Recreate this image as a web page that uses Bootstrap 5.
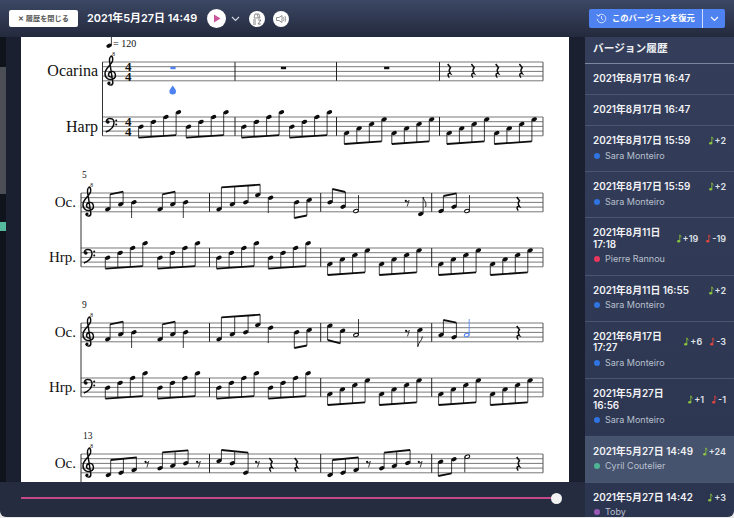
<!DOCTYPE html>
<html lang="ja">
<head>
<meta charset="utf-8">
<title>履歴</title>
<link href="https://cdn.jsdelivr.net/npm/bootstrap@5.3.0/dist/css/bootstrap.min.css" rel="stylesheet">
<style>
html,body{height:100%;margin:0;overflow:hidden;background:#e9e9e9;font-family:Inter,"Noto Sans CJK JP",sans-serif}
.app-frame{width:734px;height:517px;border-radius:0 0 6px 6px;overflow:hidden;color:#fff}
.top-bar{height:37px;flex:none;background:linear-gradient(#3b4764,#242a3d);padding:0 9px}
.close-btn{width:69px;height:17px;padding:0;border:0;border-radius:2px;background:#fff;color:#555;font-size:7.2px;font-weight:700;line-height:17px;white-space:nowrap}
.close-btn:hover{background:#fff;color:#555}
.now-date{font-size:10.9px;font-weight:600;margin-left:9px;width:110px;white-space:nowrap}
.round-ico{border-radius:50%;background:#fff;flex:none}
.play-ico{width:19px;height:19px;margin-left:10px}
.tool-ico{width:16px;height:16px}
.ico-a{margin-left:9px}.ico-b{margin-left:8px}
.chev-ico{margin-left:5px}
.restore-grp{width:136px;height:19px;border-radius:2px;background:#4d82f0;font-size:8.3px;font-weight:700}
.restore-main{padding:0 0 0 7px;width:114px;border-right:1px solid #cfdcfb;height:100%;white-space:nowrap;gap:5px}
.restore-side{flex:1;height:100%}
.work-col{width:585px}
.score-row{height:445px}
.rail{width:21px;background:#1a2030}
.rail-strip{width:5.5px;background:#0f131b}
.rs-a{height:30px}.rs-b{height:127px;background:#4b4e55}.rs-c{height:28px}.rs-d{height:9px;background:#56b89c}
.sheet{width:548px;height:445px;background:#fff;display:block;flex:none}
.gutter{width:16px;background:#1a2030}
.seek-bar{height:35px;background:#252c40;padding:0 23px 3px 21px}
.seek-track{height:2px;background:#c4488a}
.seek-thumb{width:11px;height:11px;margin-left:-5px;background:#f2f2f2;border-radius:50%;flex:none}
.side-col{width:149px;background:linear-gradient(#343e5a,#2c3550);overflow:hidden}
.side-head{height:27px;flex:none;font-size:10.7px;font-weight:700;padding:0 8px 2px;border-bottom:1px solid #7c869c;color:#eef0f4}
.ver-item{background:transparent;color:#fff;border-color:#4a5570;padding:9px 8px 9.5px;flex:none}
.ver-item.picked{background:#46536e;color:#fff}
.ver-date{font-size:9.9px;font-weight:600;line-height:11.5px;color:#f1f2f5;min-width:0}
.ver-stat{font-size:9px;line-height:11.5px;font-weight:600;color:#dfe2e8;white-space:nowrap;flex:none;margin-left:3px}
.ver-who{font-size:9px;line-height:12px;margin-top:3px;color:#b9c0ce;gap:5px}
.who-dot{width:6px;height:6px;border-radius:50%;margin-left:1px}
.note-ico{vertical-align:-1px;margin-right:1px}
.sheet text{font-family:"Liberation Serif",serif;fill:#111}
</style>
</head>
<body>
<div class="app-frame d-flex flex-column">
  <header class="top-bar d-flex align-items-center">
    <button type="button" class="btn close-btn">✕ 履歴を閉じる</button>
    <span class="now-date">2021年5月27日 14:49</span>
    <svg class="round-ico play-ico" viewBox="0 0 19 19"><path d="M7 5.5 L13.5 9.5 L7 13.5Z" fill="#c9559b"/></svg>
    <svg class="chev-ico" width="9" height="6" viewBox="0 0 9 6"><path d="M1 1 L4.5 4.5 L8 1" fill="none" stroke="#d5d9e2" stroke-width="1.1"/></svg>
    <svg class="round-ico tool-ico ico-a" viewBox="0 0 16 16"><path d="M6 3 H10 L11 7 H5Z M8 3 L9.5 7" fill="none" stroke="#777" stroke-width=".8"/><path d="M4 9 H7 M4 11 H7 M4 13 H7 M9 9 H12 L9 13 H12" fill="none" stroke="#777" stroke-width=".9"/></svg>
    <svg class="round-ico tool-ico ico-b" viewBox="0 0 16 16"><path d="M3.5 6.5 H6 L9 4.5 V11.5 L6 9.5 H3.5Z" fill="none" stroke="#888" stroke-width=".9"/><path d="M10.5 6 Q11.5 8 10.5 10 M12 5 Q13.5 8 12 11" fill="none" stroke="#999" stroke-width=".9"/></svg>
    <div class="restore-grp d-flex align-items-center ms-auto">
      <div class="restore-main d-flex align-items-center">
        <svg width="11" height="11" viewBox="0 0 11 11"><path d="M2 3 A4.3 4.3 0 1 1 1.2 5.8 M.6 1.2 L2 3.2 L4 2.4 M5.5 3 V5.8 L7.3 6.8" fill="none" stroke="#dbe5fc" stroke-width=".9"/></svg>
        <span>このバージョンを復元</span>
      </div>
      <div class="restore-side d-flex align-items-center justify-content-center">
        <svg width="9" height="6" viewBox="0 0 9 6"><path d="M1 1 L4.5 4.5 L8 1" fill="none" stroke="#fff" stroke-width="1.1"/></svg>
      </div>
    </div>
  </header>
  <div class="d-flex flex-grow-1" style="min-height:0">
    <div class="work-col d-flex flex-column">
      <div class="score-row d-flex">
        <div class="rail d-flex">
          <div class="rail-strip d-flex flex-column">
            <div class="rs-a"></div><div class="rs-b"></div><div class="rs-c"></div><div class="rs-d"></div>
          </div>
        </div>
        <svg class="sheet" id="sheet" viewBox="21 37 548 445" xmlns="http://www.w3.org/2000/svg"></svg>
        <div class="gutter"></div>
      </div>
      <div class="seek-bar d-flex align-items-center">
        <div class="seek-track flex-grow-1"></div>
        <div class="seek-thumb"></div>
      </div>
    </div>
    <aside class="side-col d-flex flex-column">
      <div class="side-head d-flex align-items-center">バージョン履歴</div>
      <div class="list-group list-group-flush rounded-0" id="vers"></div>
    </aside>
  </div>
</div>
<script src="https://cdn.jsdelivr.net/npm/bootstrap@5.3.0/dist/js/bootstrap.bundle.min.js"></script>
<script>
/* version list */
var C={s:'#2f74e0',p:'#e8365d',c:'#4fb494',t:'#9b59b6'};
var N={s:'Sara Monteiro',p:'Pierre Rannou',c:'Cyril Coutelier',t:'Toby'};
var V=[['2021年8月17日 16:47'],['2021年8月17日 16:47'],
['2021年8月17日 15:59','s','+2'],['2021年8月17日 15:59','s','+2'],
['2021年8月11日 17:18','p','+19','-19'],['2021年8月11日 16:55','s','+2'],
['2021年6月17日 17:27','s','+6','-3'],['2021年5月27日 16:56','s','+1','-1'],
['2021年5月27日 14:49','c','+24',null,1],['2021年5月27日 14:42','t','+3']];
function ni(c){return '<svg class="note-ico" width="5" height="9" viewBox="0 0 6 10"><ellipse cx="2" cy="8.2" rx="1.9" ry="1.5" fill="'+c+'"/><path d="M3.4 8 V.6 Q4 2.6 5.6 3.4" fill="none" stroke="'+c+'" stroke-width="1"/></svg>';}
document.getElementById('vers').innerHTML=V.map(function(v){
 var st='';
 if(v[2])st+='<span>'+ni('#8cc63f')+v[2]+'</span>';
 if(v[3])st+='<span class="ms-2">'+ni('#e8453c')+v[3]+'</span>';
 return '<div class="list-group-item ver-item'+(v[4]?' picked':'')+'"><div class="d-flex align-items-center justify-content-between"><div class="ver-date">'+v[0]+'</div>'+(st?'<div class="ver-stat d-flex">'+st+'</div>':'')+'</div>'+
 (v[1]?'<div class="ver-who d-flex align-items-center"><span class="who-dot" style="background:'+C[v[1]]+'"></span>'+N[v[1]]+'</div>':'')+'</div>';
}).join('');

/* score */
var o='',BL='#4d82f0',K='#0c0c0c';
function line(a,b,c,d,w,col){o+='<line x1="'+a+'" y1="'+b+'" x2="'+c+'" y2="'+d+'" stroke="'+(col||K)+'" stroke-width="'+w+'"/>';}
function staff(x1,x2,t,bars){for(var i=0;i<5;i++)line(x1,t+i*4.7,x2,t+i*4.7,.9,'#6a6a6a');
 bars.forEach(function(b){line(b,t,b,t+18.8,1,'#222')});line(x2,t,x2,t+18.8,1,'#555');}
function head(x,y,col){o+='<ellipse cx="'+x+'" cy="'+y+'" rx="2.8" ry="1.95" transform="rotate(-22 '+x+' '+y+')" fill="'+(col||K)+'"/>';}
function half(x,y,col,top,down){o+='<ellipse cx="'+x+'" cy="'+y+'" rx="2.5" ry="1.6" transform="rotate(-22 '+x+' '+y+')" fill="#fff" stroke="'+(col||K)+'" stroke-width="1"/>';
 var sx=down?x-2.5:x+2.5;line(sx,y,sx,top,.8,col);}
function beam(ns,dir,a,b,c,d){var off=dir>0?2.4:-2.4;
 ns.forEach(function(n){head(n[0],n[1]);var sx=n[0]+off,e=b+(d-b)*(sx-a)/(c-a);line(sx,n[1],sx,e,.8)});
 o+='<polygon points="'+a+','+(b-.9)+' '+c+','+(d-.9)+' '+c+','+(d+.9)+' '+a+','+(b+.9)+'" fill="'+K+'"/>';}
function q(x,y,col){o+='<path transform="translate('+x+' '+y+')" d="M-1.3 -7 L1.5 -3.2 C.2 -1.6 -.6 -.6 1.5 2.6 C-.8 1.6 -2 3.6 .2 6.6" fill="none" stroke="'+(col||K)+'" stroke-width="1.5"/>';}
function e(x,y){o+='<g transform="translate('+x+' '+y+')"><circle cx="-1.2" cy="-2.2" r="1.1" fill="'+K+'"/><path d="M-1.6 -1.4 C-.6 -.9 1 -1.2 2 -2.6 L.2 3.4" fill="none" stroke="'+K+'" stroke-width=".8"/></g>';}
function sq(x,y,col){o+='<rect x="'+(x-2.6)+'" y="'+(y-1.2)+'" width="5.2" height="2.4" fill="'+(col||K)+'"/>';}
function txt(x,y,s,size,anchor,extra){o+='<text x="'+x+'" y="'+y+'" font-size="'+size+'"'+(anchor?' text-anchor="'+anchor+'"':'')+(extra||'')+'>'+s+'</text>';}
function tclef(x,y){o+='<g transform="translate('+x+' '+y+')"><path d="M7.5 25 C4 25.5 3.4 20.5 7 19.5 C11.5 18.5 13.2 25 9 27 C5 28.6 .8 26 1 21.5 C1.2 16 7.5 13 8.5 9 C9 6.4 8 4.4 7.2 4 C5.5 5.2 5 8 6 12 L8.8 30 C9.3 33.4 4.6 34.4 4 31" fill="none" stroke="'+K+'" stroke-width="1.45"/><circle cx="5" cy="31" r="1.6" fill="'+K+'"/></g>';txt(x+9.5,y+4,'8',5.5,'middle');}
function bclef(x,y){o+='<g transform="translate('+x+' '+y+')"><path d="M.8 14 C6 12 9 8.5 9 4.5 C9 1.4 6.6 .2 4.4 .4 C2.2 .6 1 2.4 1.4 4" fill="none" stroke="'+K+'" stroke-width="1.5"/><circle cx="2.8" cy="4" r="1.8" fill="'+K+'"/><circle cx="11.2" cy="2.6" r="1" fill="'+K+'"/><circle cx="11.2" cy="6.4" r="1" fill="'+K+'"/></g>';}
function harpM(x,t,offs,bar){/* two beamed groups of four */
 var ys=offs.map(function(v){return t+v});
 [x,x+bar].forEach(function(sx){var ns=ys.map(function(y,i){return [sx+i*12.5,y]});
  beam(ns,-1,sx-2.4,t+offs[0]+11,sx+35,t+offs[0]+8.4);});}
var HI=[9.7,4.9,0,-4.7],LO=[16,11.4,7,2.4];

/* tempo */
head(109,45.7);line(111.4,45.7,111.4,37,.8);txt(113,47,'= 120',10);

/* system 1 */
staff(102.5,543,62,[235,336.5,439.5]);staff(102.5,543,117,[235,336.5,439.5]);
line(102.5,62,102.5,135.8,1,'#333');
txt(98,76,'Ocarina',16,'end');txt(98,132,'Harp',16,'end');
tclef(104,52);bclef(105,118);
txt(125,71,'4',13,null,' font-weight="700"');txt(125,81,'4',13,null,' font-weight="700"');
txt(125,126,'4',13,null,' font-weight="700"');txt(125,136,'4',13,null,' font-weight="700"');
sq(173,68,BL);o+='<path d="M172.7 85.5 C174.5 88 176 89.5 176 91.3 A3.3 3.3 0 0 1 169.4 91.3 C169.4 89.5 171 88 172.7 85.5Z" fill="'+BL+'"/>';
sq(283.5,68);sq(386.7,68);[449,472.7,497,520.7].forEach(function(x){q(x,71)});
harpM(141,117,HI,47.6);harpM(244,117,HI,48);harpM(346.7,117,LO,47.5);harpM(449.3,117,LO,47.5);

/* melody shared by systems 2 and 3 */
function melody(t,h){
 staff(81,543,t,[209.5,320.7,431.7]);staff(81,543,h,[209.5,320.7,431.7]);
 line(81,t,81,h+18.8,1,'#333');
 txt(76,t+14,'Oc.',15,'end');txt(76,h+14,'Hrp.',15,'end');
 tclef(82,t-10);bclef(83,h+1);
 var P=t+16.3,Q=t+11.3,R=t+9.3;
 beam([[107.7,P],[120.7,Q]],1,110,t+1.3,123.2,t-1.3);head(134,R);line(131.6,R,131.6,t+25,.8);
 beam([[160,P],[172.7,Q]],1,162.4,t+1.3,175.1,t-1.3);head(185.7,R);line(183.3,R,183.3,t+25,.8);
 beam([[219,P],[232.3,Q],[245.7,R],[257.7,t+2]],1,221.4,t-5.7,260.2,t-8.3);
 head(270.7,t+4.7);line(268.3,t+4.7,268.3,t+20,.8);
 beam([[296.7,R],[309.3,t+7]],-1,294.3,t+25,306.9,t+22.5);
 harpM(107.7,h,HI,52.4);harpM(219,h,HI,51.7);harpM(330,h,LO,51.7);harpM(441,h,LO,51.7);
}
melody(193,248);melody(323,378);
txt(82,178,'5',9.5);txt(82,308,'9',9.5);

/* system 2, bars 7-8 */
beam([[330,202.3],[343,206.7]],1,332.4,189,345.4,192);half(356,211,K,195);e(407,203);
head(420.7,214);line(423.1,214,423.1,197,.8);o+='<path d="M423.1 197 C424 201 427 202 425.6 207" fill="none" stroke="'+K+'" stroke-width=".9"/>';
beam([[441,211],[454,206.7]],1,443.4,196,456.4,193.3);half(467,211,K,195);q(518,204);

/* system 3, bars 11-12 */
beam([[330,325.7],[342.7,330.7]],-1,327.6,340,340.3,343.3);half(356,335,K,319);e(407.3,333);
head(420,330);line(417.8,330,417.8,346.7,.8);o+='<path d="M417.8 346.7 C418.4 342 422 341 422.4 336.5" fill="none" stroke="'+K+'" stroke-width=".9"/>';
beam([[441,335],[454,337.3]],1,443.4,320,456.4,322.7);half(466.7,335,BL,319);q(518,333);

/* system 4 */
staff(81,543,454,[209.5,320.7,431.7]);
line(81,454,81,482,1,'#333');
txt(76,468,'Oc.',15,'end');tclef(82,444);txt(83,439,'13',9.5);
function m4a(off){
 beam([[108.3+off,475],[121+off,472.7],[134+off,470]],1,110.7+off,460,136.7+off,457.3);e(146.7+off,464);
 beam([[160+off,468.3],[172.7+off,465.7],[185.7+off,463.3]],1,162.4+off,452.3,188.1+off,450.3);e(198.3+off,464);
}
m4a(0);
beam([[219,461],[232.3,463.3],[245.7,472.7]],1,221.4,450,248.1,452.7);e(257.3,464);q(270.7,465);q(296,465);
beam([[330,475],[343,472.7],[356,470]],1,332.4,460,358.4,457.3);e(368.3,464);
beam([[381.7,468.3],[394.3,466],[407.7,463]],1,384.1,452.7,410.1,450);e(420,464);
beam([[440.7,461.7],[454,459.3]],-1,438.3,476,451.6,473.3);half(467.3,456.7,K,472.3,1);q(518,464);

document.getElementById('sheet').innerHTML=o;
</script>
</body>
</html>
